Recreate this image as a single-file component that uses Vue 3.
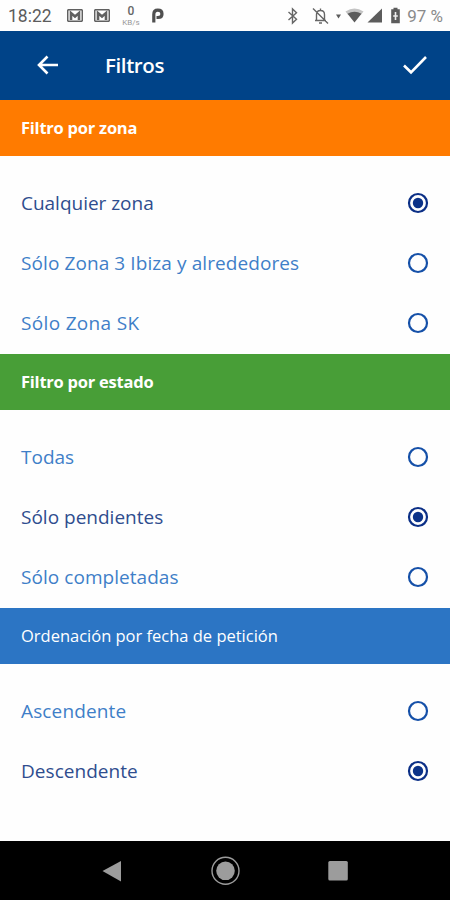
<script setup>
import { ref } from 'vue'

// spacing = letter spacing in px for each label
const groups = ref([
  {
    id: 'zona',
    title: 'Filtro por zona',
    spacing: -0.24,
    selected: 0,
    options: [
      { label: 'Cualquier zona', spacing: -0.02 },
      { label: 'Sólo Zona 3 Ibiza y alrededores', spacing: 0.09 },
      { label: 'Sólo Zona SK', spacing: 0.33 }
    ]
  },
  {
    id: 'estado',
    title: 'Filtro por estado',
    spacing: -0.24,
    selected: 1,
    options: [
      { label: 'Todas', spacing: 0 },
      { label: 'Sólo pendientes', spacing: 0 },
      { label: 'Sólo completadas', spacing: 0.05 }
    ]
  },
  {
    id: 'orden',
    title: 'Ordenación por fecha de petición',
    spacing: -0.01,
    selected: 1,
    options: [
      { label: 'Ascendente', spacing: 0.14 },
      { label: 'Descendente', spacing: 0.04 }
    ]
  }
])
</script>

<template>
  <div class="screen">
    <div class="status">
      <span class="clock">18:22</span>
      <svg v-for="n in 2" :key="n" class="mail" viewBox="0 0 16 13">
        <rect x="0.7" y="0.7" width="14.6" height="11.6" rx="1" />
        <path d="M4 11V4l4 3.500L12 4v7" />
      </svg>
      <div class="speed"><b>0</b><span>KB/s</span></div>
      <svg class="parking" viewBox="0 0 13 15">
        <path d="M2.800 14.500V6.500C2.800 3.500 4.500 2.200 6.800 2.200c2.700 0 4.200 1.500 4.200 3.700S9.500 9.500 7 9.500H5.500" />
      </svg>
      <svg class="status-right" viewBox="0 0 115 20">
        <path class="line" d="M2.500 6l8 7.200L6.500 17V3l4 3.800-8 7.200" />
        <path class="line" d="M29 14.500h11M30.500 14V8.500c0-2.500 1.500-4 4-4s4 1.500 4 4V14M34.500 2.500v2M33 17h3M27 2.500l15 15" />
        <path class="fill" d="M50 8.500h5l-2.500 4z" />
        <path class="pale" d="M59.500 5.500q9-6 18 0l-2.400 3h-13.200z" />
        <path class="fill" d="M61.500 7.800q7-4 14 0L68.500 16.500z" />
        <path class="fill" d="M96 2.500v14H81.500z" />
        <path class="fill" d="M107.500 1.800h4v1.500h2.300v14h-8.600v-14h2.300z" />
        <path class="bolt" d="M109.500 6v8M107.200 10h4.600" />
      </svg>
      <span class="battery">97 %</span>
    </div>

    <header class="bar">
      <svg class="back" viewBox="0 0 22 20">
        <path d="M21 10H2.500M10.500 1.500L2 10l8.500 8.500" />
      </svg>
      <h1>Filtros</h1>
      <svg class="check" viewBox="0 0 26 20">
        <path d="M2 10.500l7 6.800L24 2" />
      </svg>
    </header>

    <section v-for="group in groups" :key="group.id" class="group">
      <h2 :class="group.id">
        <span :style="{ letterSpacing: group.spacing + 'px' }">{{ group.title }}</span>
      </h2>
      <div
        v-for="(option, i) in group.options"
        :key="option.label"
        class="option"
        :class="{ active: group.selected === i }"
        @click="group.selected = i"
      >
        <span :style="{ letterSpacing: option.spacing + 'px' }">{{ option.label }}</span>
        <svg class="radio" viewBox="0 0 22 22">
          <circle class="ring" cx="11" cy="11" r="9" />
          <circle v-if="group.selected === i" class="dot" cx="11" cy="11" r="5.200" />
        </svg>
      </div>
    </section>

    <nav class="nav">
      <svg viewBox="0 0 30 30"><path d="M5.500 15L24 5v20.500z" /></svg>
      <svg viewBox="0 0 30 30">
        <circle class="outline" cx="15.500" cy="14.800" r="13.500" />
        <circle cx="15.500" cy="14.800" r="9.300" />
      </svg>
      <svg viewBox="0 0 30 30"><rect x="5.300" y="5" width="19.500" height="19.500" rx="1.500" /></svg>
    </nav>
  </div>
</template>

<style>
body {
  margin: 0;
  background: #fff;
}
</style>

<style scoped>
.screen {
  width: 450px;
  height: 900px;
  display: flex;
  flex-direction: column;
  overflow: hidden;
  background: #fefefe;
  font-family: "Open Sans", "Noto Sans", sans-serif;
}

.status {
  height: 31px;
  flex-shrink: 0;
  display: flex;
  align-items: center;
  box-sizing: border-box;
  padding: 0 7px 0 8px;
  color: #666;
  font-family: Roboto, sans-serif;
}

.clock {
  width: 59px;
  font-size: 17.5px;
  color: #5c5c5c;
}

.mail {
  width: 16px;
  height: 13px;
  margin-right: 11px;
  fill: none;
  stroke: #606060;
  stroke-width: 1.500;
}

.mail path {
  stroke-width: 2.600;
}

.speed {
  width: 20px;
  display: flex;
  flex-direction: column;
  align-items: center;
}

.speed b {
  font-size: 12px;
  line-height: 13px;
  font-weight: 500;
}

.speed span {
  font-size: 8px;
  line-height: 8px;
  padding-top: 1px;
  color: #999;
}

.parking {
  width: 13px;
  height: 15px;
  margin-left: 10px;
  fill: none;
  stroke: #505050;
  stroke-width: 3.200;
}

.status-right {
  width: 115px;
  height: 20px;
  margin-left: auto;
}

.line {
  fill: none;
  stroke: #666;
  stroke-width: 1.400;
}

.fill {
  fill: #5c5c5c;
}

.pale {
  fill: #c4c4c4;
}

.bolt {
  fill: none;
  stroke: #eee;
  stroke-width: 1.600;
}

.battery {
  margin-left: 6px;
  font-size: 17px;
  color: #8a8a8a;
}

.bar {
  height: 69px;
  flex-shrink: 0;
  display: flex;
  align-items: center;
  box-sizing: border-box;
  padding: 0 22px 2px 37px;
  background: #004388;
  color: #fff;
}

.bar svg {
  fill: none;
  stroke: #fff;
  stroke-width: 2.600;
}

.back {
  width: 22px;
  height: 20px;
}

.check {
  width: 26px;
  height: 20px;
}

h1 {
  flex: 1;
  margin: 0 0 0 46px;
  font-size: 20.5px;
  font-weight: 600;
  letter-spacing: -0.4px;
}

.group {
  height: 254px;
  flex-shrink: 0;
}

.group:nth-of-type(3) {
  height: 233px;
}

h2 {
  height: 56px;
  box-sizing: border-box;
  margin: 0 0 17px;
  padding: 0 0 1px 21px;
  display: flex;
  align-items: center;
  color: #fff;
  font-size: 16.5px;
  font-weight: 700;
}

.zona {
  background: #ff7b00;
}

.estado {
  background: #489e37;
}

.orden {
  background: #2c75c4;
  font-weight: 500;
}

.option {
  height: 60px;
  display: flex;
  align-items: center;
  justify-content: space-between;
  padding: 0 21px;
  color: #3f7fc8;
  font-size: 19px;
  font-weight: 400;
  cursor: pointer;
}

.active {
  color: #2f4d8e;
}

.radio {
  width: 22px;
  height: 22px;
}

.ring {
  fill: none;
  stroke: #1550a8;
  stroke-width: 2.200;
}

.active .ring {
  stroke: #0b2f86;
}

.dot {
  fill: #0b3288;
}

.nav {
  flex: 1;
  display: flex;
  align-items: center;
  justify-content: space-between;
  padding: 0 97px;
  background: #000;
}

.nav svg {
  width: 30px;
  height: 30px;
  fill: #9c9c9c;
}

.nav .outline {
  fill: none;
  stroke: #9c9c9c;
  stroke-width: 1.400;
}
</style>
